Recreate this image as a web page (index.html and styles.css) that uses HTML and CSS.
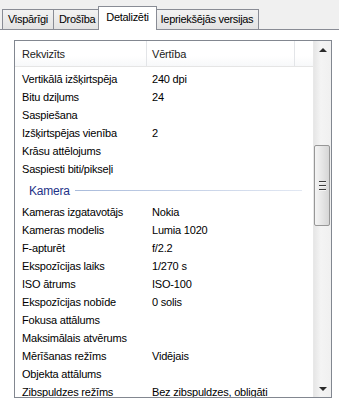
FILE: index.html
```html
<!DOCTYPE html>
<html>
<head>
  <title>Rekvizīti - Detalizēti</title>
  <link rel="stylesheet" href="styles.css">
</head>
<body>
  <div class="dialog">
    <div class="tab-strip">
      <div class="tab">Vispārīgi</div>
      <div class="tab">Drošība</div>
      <div class="tab active">Detalizēti</div>
      <div class="tab">Iepriekšējās versijas</div>
    </div>

    <div class="tab-page">
      <div class="listbox">
        <div class="list">
          <div class="list-header">
            <div class="col col-name">Rekvizīts</div>
            <div class="col col-value">Vērtība</div>
            <div class="col col-extra"></div>
          </div>

          <div class="list-body">
            <div class="row"><span class="name">Vertikālā izšķirtspēja</span><span class="value">240 dpi</span></div>
            <div class="row"><span class="name">Bitu dziļums</span><span class="value">24</span></div>
            <div class="row"><span class="name">Saspiešana</span><span class="value"></span></div>
            <div class="row"><span class="name">Izšķirtspējas vienība</span><span class="value">2</span></div>
            <div class="row"><span class="name">Krāsu attēlojums</span><span class="value"></span></div>
            <div class="row"><span class="name">Saspiesti biti/pikseļi</span><span class="value"></span></div>

            <div class="group-row">
              <span class="group-title">Kamera</span>
              <span class="group-line"></span>
            </div>

            <div class="row"><span class="name">Kameras izgatavotājs</span><span class="value">Nokia</span></div>
            <div class="row"><span class="name">Kameras modelis</span><span class="value">Lumia 1020</span></div>
            <div class="row"><span class="name">F-apturēt</span><span class="value">f/2.2</span></div>
            <div class="row"><span class="name">Ekspozīcijas laiks</span><span class="value">1/270 s</span></div>
            <div class="row"><span class="name">ISO ātrums</span><span class="value">ISO-100</span></div>
            <div class="row"><span class="name">Ekspozīcijas nobīde</span><span class="value">0 solis</span></div>
            <div class="row"><span class="name">Fokusa attālums</span><span class="value"></span></div>
            <div class="row"><span class="name">Maksimālais atvērums</span><span class="value"></span></div>
            <div class="row"><span class="name">Mērīšanas režīms</span><span class="value">Vidējais</span></div>
            <div class="row"><span class="name">Objekta attālums</span><span class="value"></span></div>
            <div class="row"><span class="name">Zibspuldzes režīms</span><span class="value">Bez zibspuldzes, obligāti</span></div>
          </div>
        </div>

        <div class="scrollbar">
          <div class="scroll-btn"><span class="arrow-up"></span></div>
          <div class="scroll-track">
            <div class="scroll-thumb">
              <span class="grip"></span>
              <span class="grip"></span>
              <span class="grip"></span>
            </div>
          </div>
          <div class="scroll-btn"><span class="arrow-down"></span></div>
        </div>
      </div>
    </div>
  </div>
</body>
</html>
```

FILE: styles.css
```css
body {
  margin: 0;
  font-family: "Liberation Sans", Arial, sans-serif;
  font-size: 11px;
  color: #000000;
  background-color: #ffffff;
}

.dialog {
  width: 339px;
  height: 409px;
  overflow: hidden;
}

/* Tabs */
.tab-strip {
  display: flex;
  align-items: flex-end;
  height: 29px;
  padding-left: 2px;
  background-color: #f0f0f0;
  border-bottom: 1px solid #898c95;
}
.tab {
  height: 19px;
  line-height: 19px;
  padding: 0 5px;
  border: 1px solid #898c95;
  border-bottom: none;
  margin-right: -1px;
  background: linear-gradient(#f2f2f2, #e3e3e3);
  color: #000000;
  letter-spacing: -0.3px;
  white-space: nowrap;
}
.tab.active {
  position: relative;
  height: 23px;
  line-height: 20px;
  margin: 0 -1px -1px -2px;
  padding: 0 7px;
  background: #ffffff;
  z-index: 1;
}
.tab.active + .tab {
  margin-left: -1px;
}

/* Tab page */
.tab-page {
  padding: 10px 7px 11px 14px;
}

.listbox {
  display: flex;
  height: 356px;
  border: 1px solid #828790;
}

.list {
  flex: 1;
  overflow: hidden;
  letter-spacing: -0.2px;
}

.list-header {
  display: flex;
  height: 25px;
  border-bottom: 1px solid #e5e5e5;
  background: linear-gradient(#ffffff, #ffffff 60%, #f7f8fa);
  color: #222222;
}
.col {
  line-height: 26px;
  padding-left: 7px;
  border-right: 1px solid #e3e5e8;
  white-space: nowrap;
}
.col-name { width: 124px; }
.col-value { width: 142px; padding-left: 5px; }
.col-extra { flex: 1; border-right: none; }

.list-body {
  padding-top: 3px;
}

.row {
  display: flex;
  height: 18px;
  line-height: 18px;
  white-space: nowrap;
}
.row .name {
  width: 130px;
  padding-left: 7px;
}
.row .value {
  flex: 1;
}

.group-row {
  display: flex;
  align-items: center;
  height: 25px;
  padding-left: 14px;
  padding-right: 11px;
}
.group-title {
  color: #1e3287;
  font-size: 12px;
  margin-right: 5px;
}
.group-line {
  flex: 1;
  height: 1px;
  background: linear-gradient(to right, #a9bbdb, #e2e8f3);
}

/* Scrollbar */
.scrollbar {
  width: 17px;
  display: flex;
  flex-direction: column;
  background: linear-gradient(to right, #e6e6e6, #f4f4f4 40%, #f0f0f0);
  border-left: 1px solid #e8e8e8;
}
.scroll-btn {
  height: 17px;
  display: flex;
  align-items: center;
  justify-content: center;
}
.arrow-up {
  width: 0;
  height: 0;
  border-left: 4px solid transparent;
  border-right: 4px solid transparent;
  border-bottom: 4px solid #2a2a2a;
}
.arrow-down {
  width: 0;
  height: 0;
  border-left: 4px solid transparent;
  border-right: 4px solid transparent;
  border-top: 4px solid #2a2a2a;
}
.scroll-track {
  flex: 1;
  padding-top: 87px;
}
.scroll-thumb {
  height: 79px;
  margin: 0 1px 0 0;
  border: 1px solid #979797;
  border-radius: 2px;
  background: linear-gradient(to right, #f4f4f4, #e6e6e6 50%, #d6d6d6);
  display: flex;
  flex-direction: column;
  align-items: center;
  justify-content: center;
  gap: 2px;
}
.grip {
  width: 7px;
  height: 1px;
  background-color: #3d3d3d;
  border-bottom: 1px solid #f4f4f4;
}
```
